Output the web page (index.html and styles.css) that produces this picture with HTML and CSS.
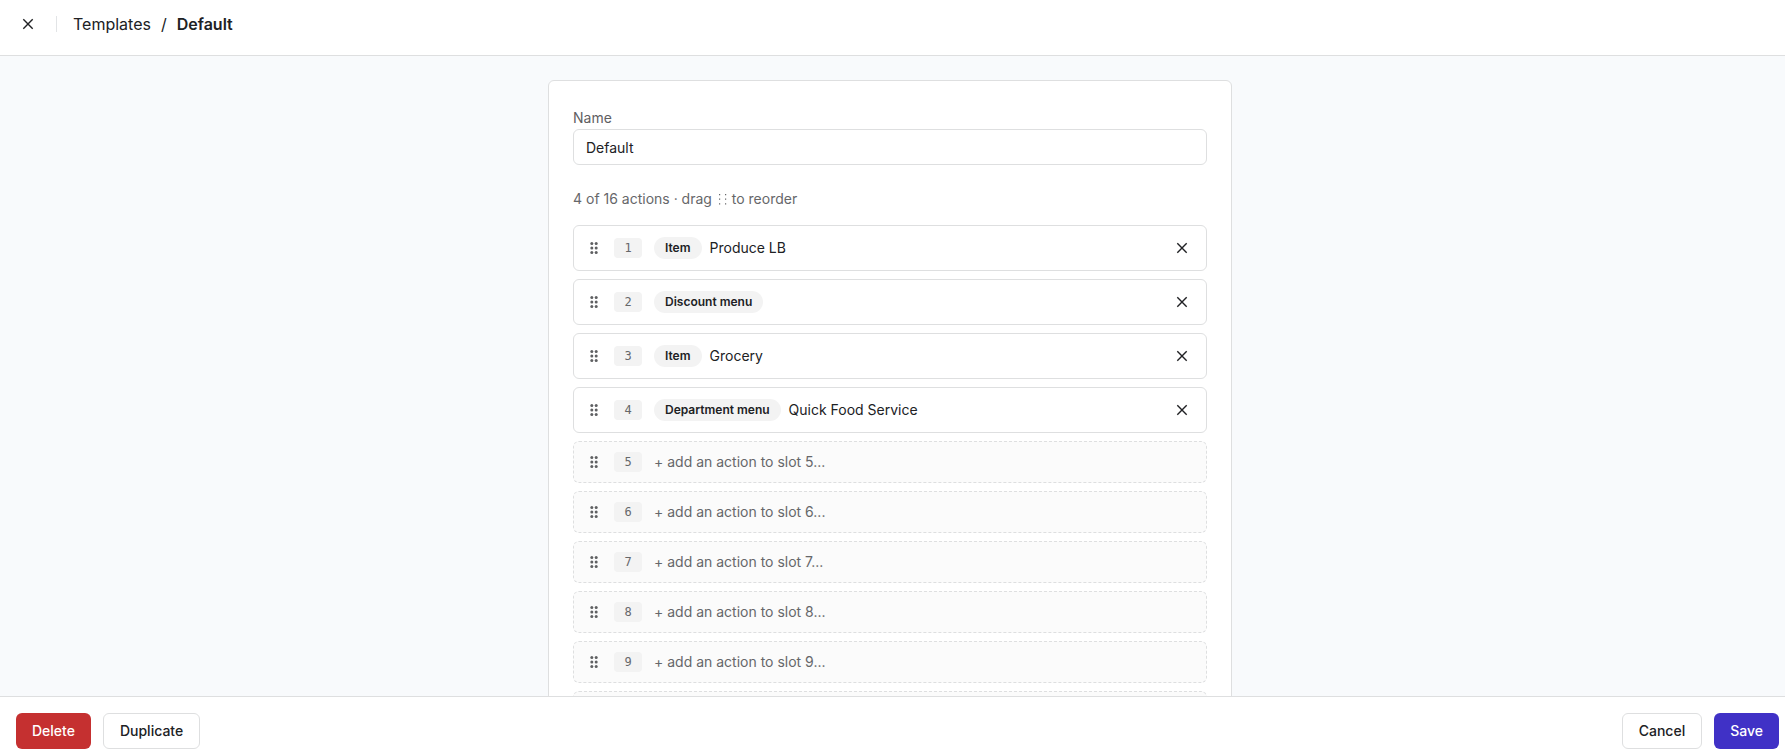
FILE: index.html
```html
<!DOCTYPE html>
<html lang="en">
<head>
<meta charset="utf-8">
<title>Templates / Default</title>
<link rel="stylesheet" href="styles.css">
</head>
<body>
<svg class="sprite" aria-hidden="true">
  <symbol id="grip" viewBox="0 0 16 16"><g fill="currentColor"><circle cx="5.8" cy="3.5" r="1.5"/><circle cx="10.2" cy="3.5" r="1.5"/><circle cx="5.8" cy="8" r="1.5"/><circle cx="10.2" cy="8" r="1.5"/><circle cx="5.8" cy="12.5" r="1.5"/><circle cx="10.2" cy="12.5" r="1.5"/></g></symbol>
  <symbol id="cross" viewBox="0 0 16 16"><path d="M3.3 3.3l9.4 9.4M12.7 3.3l-9.4 9.4" fill="none" stroke="currentColor" stroke-width="1.4"/></symbol>
  <symbol id="dots" viewBox="0 0 12 14"><path d="M3 2h1.2v1.2H3zM9 2h1.2v1.2H9zM3 6.6h1.2v1.2H3zM9 6.6h1.2v1.2H9zM3 11.2h1.2v1.2H3zM9 11.2h1.2v1.2H9z" fill="currentColor"/></symbol>
</svg>
<header class="topbar">
  <button class="icon-button" type="button" aria-label="Close"><svg class="icon"><use href="#cross"/></svg></button>
  <nav class="breadcrumb" aria-label="Breadcrumb"><a href="#templates">Templates</a><span>/</span><strong>Default</strong></nav>
</header>
<main class="content">
  <form class="card" id="template">
    <label class="label" for="name">Name</label>
    <input class="input" id="name" type="text" value="Default">
    <p class="hint">4 of 16 actions · drag <svg class="dots" role="img" aria-label="handle"><use href="#dots"/></svg> to reorder</p>
    <ol class="slots">
      <li class="slot"><svg class="icon grip"><use href="#grip"/></svg><span class="number">1</span><span class="action"><span class="chip">Item</span><span>Produce LB</span></span><button class="icon-button" type="button" aria-label="Remove action 1"><svg class="icon"><use href="#cross"/></svg></button></li>
      <li class="slot"><svg class="icon grip"><use href="#grip"/></svg><span class="number">2</span><span class="action"><span class="chip">Discount menu</span></span><button class="icon-button" type="button" aria-label="Remove action 2"><svg class="icon"><use href="#cross"/></svg></button></li>
      <li class="slot"><svg class="icon grip"><use href="#grip"/></svg><span class="number">3</span><span class="action"><span class="chip">Item</span><span>Grocery</span></span><button class="icon-button" type="button" aria-label="Remove action 3"><svg class="icon"><use href="#cross"/></svg></button></li>
      <li class="slot"><svg class="icon grip"><use href="#grip"/></svg><span class="number">4</span><span class="action"><span class="chip">Department menu</span><span>Quick Food Service</span></span><button class="icon-button" type="button" aria-label="Remove action 4"><svg class="icon"><use href="#cross"/></svg></button></li>
      <li class="slot empty"><svg class="icon grip"><use href="#grip"/></svg><span class="number">5</span><button class="add" type="button">+ add an action to slot 5...</button></li>
      <li class="slot empty"><svg class="icon grip"><use href="#grip"/></svg><span class="number">6</span><button class="add" type="button">+ add an action to slot 6...</button></li>
      <li class="slot empty"><svg class="icon grip"><use href="#grip"/></svg><span class="number">7</span><button class="add" type="button">+ add an action to slot 7...</button></li>
      <li class="slot empty"><svg class="icon grip"><use href="#grip"/></svg><span class="number">8</span><button class="add" type="button">+ add an action to slot 8...</button></li>
      <li class="slot empty"><svg class="icon grip"><use href="#grip"/></svg><span class="number">9</span><button class="add" type="button">+ add an action to slot 9...</button></li>
      <li class="slot empty"></li>
    </ol>
  </form>
</main>
<footer class="actions">
  <button class="button danger" type="button">Delete</button>
  <button class="button outline" type="button">Duplicate</button>
  <button class="button outline push" type="button">Cancel</button>
  <button class="button primary" type="submit" form="template">Save</button>
</footer>
</body>
</html>
```
FILE: styles.css
```css
* { box-sizing: border-box; }

body {
  margin: 0;
  height: 100vh;
  display: flex;
  flex-direction: column;
  background: #f8fafc;
  color: #202124;
  font: 14px/20px Inter, sans-serif;
}

button, input { font: inherit; color: inherit; }
.sprite { display: none; }
.icon { display: block; width: 16px; height: 16px; flex: none; }

.topbar {
  display: flex;
  align-items: center;
  gap: 16px;
  padding: 12px 16px 19px;
  background: #fff;
  border-bottom: 1px solid #dedfe0;
}

.icon-button {
  display: grid;
  place-items: center;
  width: 24px;
  height: 24px;
  padding: 0;
  border: 0;
  background: none;
}

.breadcrumb {
  display: flex;
  gap: 10px;
  padding-left: 16px;
  font-size: 16px;
  line-height: 16px;
  border-left: 1px solid #e2e4e6;
}

.breadcrumb a { color: inherit; text-decoration: none; }
.breadcrumb strong { font-weight: 600; }

.content {
  flex: 1;
  min-height: 0;
  overflow-y: auto;
  scrollbar-width: none;
  padding: 24px 5px 24px 0;
}

.card {
  max-width: 684px;
  margin: 0 auto;
  padding: 24px;
  background: #fff;
  border: 1px solid #dedfe0;
  border-radius: 6px;
}

.label { display: block; padding: 3px 0 1px; color: #5f6062; }

.input {
  display: block;
  width: 100%;
  height: 36px;
  padding: 0 12px;
  background: #fff;
  border: 1px solid #dedfe0;
  border-radius: 6px;
}

.hint { margin: 24px 0 16px; color: #66676a; }
.dots { width: 12px; height: 14px; vertical-align: -2px; }

.slots {
  display: grid;
  gap: 8px;
  margin: 0;
  padding: 0;
  list-style: none;
}

.slot {
  display: flex;
  align-items: center;
  gap: 12px;
  min-height: 46px;
  padding: 0 12px;
  border: 1px solid #dedfe0;
  border-radius: 6px;
}

.empty {
  min-height: 42px;
  background: #fbfbfb;
  border-style: dashed;
}

.grip { color: #5f6062; }

.number {
  width: 28px;
  background: #f3f3f3;
  border-radius: 4px;
  color: #66676a;
  font: 12px/20px "DejaVu Sans Mono", monospace;
  text-align: center;
}

.action { display: flex; flex: 1; align-items: center; gap: 8px; }

.chip {
  padding: 0 11px;
  background: #f3f3f3;
  border-radius: 11px;
  font-size: 12px;
  font-weight: 600;
  line-height: 22px;
}

.add {
  flex: 1;
  padding: 0;
  border: 0;
  background: none;
  color: #66676a;
  text-align: left;
}

.actions {
  display: flex;
  gap: 12px;
  padding: 16px 6px 5px 16px;
  background: #fff;
  border-top: 1px solid #dedfe0;
}

.button {
  height: 36px;
  padding: 0 16px;
  border: 0;
  border-radius: 6px;
  font-weight: 500;
}

.outline { background: #fff; border: 1px solid #dedfe0; }
.push { margin-left: auto; }
.danger { background: #c53030; color: #fff; }
.primary { background: #4031c6; color: #fff; }
```
